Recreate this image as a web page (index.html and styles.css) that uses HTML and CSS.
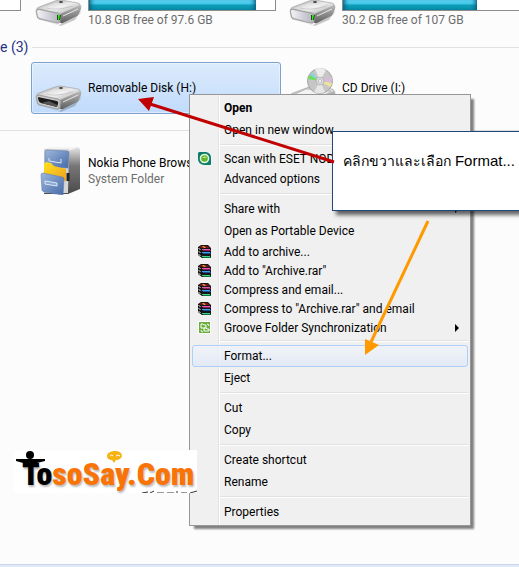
FILE: index.html
```html
<!DOCTYPE html>
<html lang="th">
<head>
  <meta charset="UTF-8">
  <meta name="viewport" content="width=device-width, initial-scale=1.0">
  <title>Computer</title>
  <link rel="stylesheet" href="styles.css">
</head>
<body>
  <!-- shared icons -->
  <svg class="defs" width="0" height="0" aria-hidden="true">
    <defs>
      <linearGradient id="metalTop" x1="0" y1="0" x2="1" y2="1">
        <stop offset="0" stop-color="#a4a4a4"/>
        <stop offset="0.5" stop-color="#ececec"/>
        <stop offset="1" stop-color="#a8a8a8"/>
      </linearGradient>
      <linearGradient id="metalSide" x1="0" y1="0" x2="0" y2="1">
        <stop offset="0" stop-color="#bcbcbc"/>
        <stop offset="1" stop-color="#5c5c5c"/>
      </linearGradient>
      <linearGradient id="metalFront" x1="0" y1="0" x2="1" y2="0">
        <stop offset="0" stop-color="#f2f2f7"/>
        <stop offset="1" stop-color="#b4b4c0"/>
      </linearGradient>
      <linearGradient id="cabinet" x1="0" y1="0" x2="0" y2="1">
        <stop offset="0" stop-color="#e8e8e8"/>
        <stop offset="0.4" stop-color="#777"/>
        <stop offset="1" stop-color="#4a4a4a"/>
      </linearGradient>
      <linearGradient id="drawer" x1="0" y1="0" x2="1" y2="1">
        <stop offset="0" stop-color="#9db8dc"/>
        <stop offset="1" stop-color="#4669a8"/>
      </linearGradient>
      <linearGradient id="folder" x1="0" y1="0" x2="1" y2="1">
        <stop offset="0" stop-color="#ffe21c"/>
        <stop offset="1" stop-color="#f0a020"/>
      </linearGradient>
      <symbol id="drive-body" viewBox="0 0 48 48">
        <path d="M4 41 L24 47 L45 36 L47 32 L40 42 L26 48 Z" fill="#000" opacity="0.2"/>
        <path d="M2 32 Q1 30 4 29 L20 23 Q23 22 26 22 L43 25 Q46 26 45 28 L26 37 Z" fill="url(#metalTop)" stroke="#9a9a9a" stroke-width="0.6"/>
        <path d="M7 30 L20 25 L33 28 L22 33 Z" fill="#fff" opacity="0.3"/>
        <path d="M11 30 Q21 33 38 28" fill="none" stroke="#aaa" stroke-width="0.5"/>
        <path d="M25 36 L45 27 Q47 27 46 31 L44 36 Q43 38 40 39 L28 45 Q25 46 25 44 Z" fill="url(#metalSide)"/>
        <path d="M28 38 L43 31" stroke="#e5e5e5" stroke-width="1"/>
        <path d="M1 33 Q1 31 4 31 L23 35 Q27 36 26 39 L25 44 Q24 46 21 45 L4 41 Q2 40 2 38 Z" fill="#b4b4b4" stroke="#8a8a8a" stroke-width="0.6"/>
        <ellipse cx="26" cy="24" rx="2" ry="1" fill="#444"/>
      </symbol>
      <symbol id="hard-drive" viewBox="0 0 48 48">
        <use href="#drive-body"/>
        <path d="M2 33 Q2 32 4 32 L22 36 Q24 36 24 38 L23 43 Q23 44 21 44 L5 40 Q3 39 3 38 Z" fill="url(#metalFront)"/>
        <path d="M22 37 L26 37 L25 42 L22 42 Z" fill="#14500f"/>
        <path d="M23 37 L25 37 L24 42 L23 42 Z" fill="#3ddb23"/>
      </symbol>
      <symbol id="removable-drive" viewBox="0 0 48 48">
        <use href="#drive-body"/>
        <path d="M2 33 Q2 32 4 32 L22 36 Q24 36 24 38 L23 43 Q23 44 21 44 L5 40 Q3 39 3 38 Z" fill="#d0d0d0"/>
        <path d="M3 33 L22 37 Q24 38 23 40 L22 43 L6 39 Q3 38 3 33 Z" fill="#1c1c1c"/>
        <path d="M6 39 L14 37 L22 41 L22 43 Z" fill="#555"/>
      </symbol>
      <symbol id="rar" viewBox="0 0 14 14">
        <path d="M0 2 L3 0 H10 L13 3 V13 H4 L0 10 Z" fill="#161616"/>
        <path d="M1 2 L3 1 H9 L12 3 H4 Z" fill="#7d1023"/>
        <path d="M4 1 H6 L8 3 H6 Z" fill="#d9a520"/>
        <path d="M4 4 H12 V5 H4 Z" fill="#e356b5"/>
        <path d="M5 5 H13 V6 H5 Z" fill="#8e1c5f"/>
        <path d="M4 7 H12 V8 H4 Z" fill="#3d9df0"/>
        <path d="M5 8 H13 V9 H5 Z" fill="#1a4f9c"/>
        <path d="M4 11 H12 V12 H4 Z" fill="#37d67e"/>
        <path d="M5 12 H13 V13 H5 Z" fill="#0d7040"/>
        <path d="M0 3 H1 L3 5 H2 Z M0 6 H1 L3 8 H2 Z M0 9 H1 L3 11 H2 Z" fill="#ddd"/>
      </symbol>
    </defs>
  </svg>

  <main class="explorer">
    <section class="tiles drives">
      <div class="tile">
        <div class="bar"></div>
        <p class="muted">&nbsp;</p>
      </div>
      <div class="tile">
        <svg class="icon"><use href="#hard-drive"/></svg>
        <div class="info">
          <div class="bar"><span class="fill" style="width: 90%"></span></div>
          <p class="muted">10.8 GB free of 97.6 GB</p>
        </div>
      </div>
      <div class="tile">
        <svg class="icon"><use href="#hard-drive"/></svg>
        <div class="info">
          <div class="bar"><span class="fill" style="width: 72%"></span></div>
          <p class="muted">30.2 GB free of 107 GB</p>
        </div>
      </div>
    </section>

    <h2 class="group-title"><span>e (3)</span></h2>

    <section class="tiles">
      <div></div>
      <div class="tile selected">
        <svg class="icon"><use href="#removable-drive"/></svg>
        <p class="name">Removable Disk (H:)</p>
      </div>
      <div class="tile">
        <svg class="icon" viewBox="0 0 48 48">
          <use href="#drive-body"/>
          <path d="M4 31 L17 25 L42 27 L28 36 Z" fill="#f3f3f3" stroke="#aaa" stroke-width="0.7"/>
          <circle cx="31" cy="17" r="12.5" fill="#c6c6c6" stroke="#a5a5a5"/>
          <path d="M31 17 L26 5 A12 12 0 0 1 37 6 Z" fill="#ececec"/>
          <path d="M31 17 L36 28 A12 12 0 0 1 25 28 Z" fill="#e6e6e6"/>
          <path d="M31 17 L19 15 A12 12 0 0 1 21 11 Z" fill="#69e05a"/>
          <path d="M31 17 L21 11 A12 12 0 0 1 23 8 Z" fill="#8fcfd6"/>
          <path d="M31 17 L43 19 A12 12 0 0 1 41 23 Z" fill="#eee59a"/>
          <path d="M31 17 L43 13 A12 12 0 0 1 43 18 Z" fill="#d9b9dc"/>
          <circle cx="31" cy="17" r="4" fill="#d9d9d9" stroke="#aaa" stroke-width="0.7"/>
          <circle cx="31" cy="17" r="1.5" fill="#fff" stroke="#999" stroke-width="0.5"/>
        </svg>
        <p class="name">CD Drive (I:)</p>
      </div>
    </section>

    <hr class="group-line">

    <section class="tiles">
      <div></div>
      <div class="tile">
        <svg class="icon" viewBox="0 0 48 48">
          <path d="M9 2 L16 0 H43 L45 2 V42 L33 47 H9 Z" fill="url(#cabinet)"/>
          <path d="M9 2 L16 0 H43 L36 3 Z" fill="#f4f4f4"/>
          <path d="M9 2 H34 L33 46 H9 Z" fill="#d5d5d5"/>
          <path d="M10 5 Q10 3 12 3 L32 4 Q34 4 34 6 L33 21 L10 20 Z" fill="url(#drawer)" stroke="#5f7fae" stroke-width="0.6"/>
          <path d="M14 11 V14 L26 16 V12" fill="none" stroke="#dce8f7" stroke-width="1"/>
          <path d="M33 26 V34" stroke="#222" stroke-width="3"/>
          <path d="M9 17 L11 15 L16 16 L19 19 L31 22 V34 L9 31 Z" fill="url(#folder)"/>
          <path d="M6 28 Q6 26 8 26 L27 30 Q29 30 29 32 L28 48 L9 45 Q7 44 7 43 Z" fill="url(#drawer)" stroke="#5f7fae" stroke-width="0.6"/>
          <path d="M10 34 V37 L22 39 V36 Z" fill="#8aa8d2" stroke="#dce8f7" stroke-width="1"/>
        </svg>
        <div class="info">
          <p class="name">Nokia Phone Browser</p>
          <p class="muted">System Folder</p>
        </div>
      </div>
    </section>
  </main>

  <div class="details-pane"></div>

  <div class="menu" role="menu">
    <button class="default">Open</button>
    <button>Open in new window</button>
    <hr>
    <button class="with-icon">
      <svg class="menu-icon" viewBox="0 0 14 14">
        <path d="M1 0 H8 Q13 1 13 6 V12 Q13 13 12 13 H6 Q0 12 0 7 V1 Z" fill="#0a7d6c"/>
        <circle cx="6.5" cy="6.5" r="4.8" fill="#e9f7df"/>
        <circle cx="6.5" cy="6.5" r="3.3" fill="#62b32e"/>
        <path d="M4 6 Q6.5 3 9 6 Z" fill="#b9e58c"/>
      </svg>
      Scan with ESET NOD
    </button>
    <button>Advanced options</button>
    <hr>
    <button class="submenu">Share with</button>
    <button>Open as Portable Device</button>
    <button class="with-icon"><svg class="menu-icon"><use href="#rar"/></svg>Add to archive...</button>
    <button class="with-icon"><svg class="menu-icon"><use href="#rar"/></svg>Add to "Archive.rar"</button>
    <button class="with-icon"><svg class="menu-icon"><use href="#rar"/></svg>Compress and email...</button>
    <button class="with-icon"><svg class="menu-icon"><use href="#rar"/></svg>Compress to "Archive.rar" and email</button>
    <button class="with-icon submenu">
      <svg class="menu-icon" viewBox="0 0 14 14">
        <rect width="13" height="13" fill="#fff"/>
        <rect x="1" y="1" width="11" height="11" fill="#6aae3c"/>
        <path d="M3 7 V3 H5 L6 4 H8 V7 Z" fill="none" stroke="#fff"/>
        <path d="M6 10 V7 H8 L9 8 H11 V10 Z" fill="#6aae3c" stroke="#fff"/>
        <path d="M9 3 Q11 3 11 5 M3 9 Q3 11 5 11" fill="none" stroke="#fff"/>
      </svg>
      Groove Folder Synchronization
    </button>
    <hr>
    <button class="active">Format...</button>
    <button>Eject</button>
    <hr>
    <button>Cut</button>
    <button>Copy</button>
    <hr>
    <button>Create shortcut</button>
    <button>Rename</button>
    <hr>
    <button>Properties</button>
  </div>

  <div class="callout">คลิกขวาและเลือก <span class="latin">Format...</span></div>

  <svg class="arrows" aria-hidden="true">
    <path d="M334 162 L150 104" stroke="#c00000" stroke-width="3"/>
    <path d="M138 99 L154 97 L149 111 Z" fill="#c00000"/>
    <path d="M428 221 L371 342" stroke="#ff9900" stroke-width="3"/>
    <path d="M365 355 L365 339 L379 345 Z" fill="#ff9900"/>
  </svg>

  <div class="logo">
    <svg class="logo-art" viewBox="0 0 183 43" aria-hidden="true">
      <circle cx="16" cy="5" r="4" fill="#000"/>
      <path d="M2 9 H31 V11 L23 13 H9 L2 11 Z" fill="#000"/>
      <path d="M101 1 C110 1 110 10 102 10 L100 13 L98 10 C91 10 91 1 101 1 Z" fill="#f5b314"/>
      <path d="M96 6 Q98 4 99 6 M102 6 Q104 4 106 6" fill="none" stroke="#fff"/>
      <path d="M128 43 L134 42 M136 43 L140 41 M143 43 H150 M153 43 H160 M163 41 V43 M167 43 H173 M176 43 L183 41" stroke="#333" stroke-width="1"/>
    </svg>
    <span class="dark">To</span><span>soSay.Com</span>
  </div>
</body>
</html>
```
FILE: styles.css
```css
body {
  margin: 0;
  min-height: 100vh;
  display: flex;
  flex-direction: column;
  position: relative;
  overflow: hidden;
  background-color: #fcfcfc;
  color: #000;
  font-family: Roboto, "Open Sans", sans-serif;
  font-size: 12px;
  line-height: 16px;
}

p {
  margin: 0;
}

.defs {
  position: absolute;
}

.explorer {
  flex: 1;
}

/* Tiles */
.tiles {
  display: grid;
  grid-template-columns: 27px 250px minmax(250px, 1fr);
  gap: 4px;
}

.tile {
  display: flex;
  align-items: center;
  gap: 5px;
  box-sizing: border-box;
  height: 52px;
  padding: 0 3px;
  border: 1px solid transparent;
  border-radius: 3px;
  white-space: nowrap;
}

.tile.selected {
  border-color: #7da2ce;
  background: linear-gradient(#dcebfc, #c1dbfc);
  box-shadow: inset 0 0 0 1px rgba(255, 255, 255, 0.4);
}

.icon {
  flex: none;
  width: 48px;
  height: 48px;
}

.muted {
  color: #6d6d6d;
}

/* only the lower part of the drives row is scrolled into view */
.drives {
  height: 29px;
}

.drives .tile {
  height: 29px;
  align-items: flex-end;
  overflow: hidden;
  padding-bottom: 1px;
  border-width: 0 1px;
}

.drives .tile:first-child {
  flex-direction: column;
  align-items: stretch;
  justify-content: flex-end;
  gap: 0;
  padding-left: 0;
  padding-right: 5px;
  border-left: 0;
}

.drives .tile:first-child .bar {
  border-left: 0;
}

.drives .icon {
  margin-bottom: 2px;
}

.drives .info {
  width: 188px;
}

.bar {
  height: 11px;
  margin-bottom: 1px;
  border: 1px solid #8c8c8c;
  border-top: 0;
  box-sizing: border-box;
  background-color: #fff;
}

.fill {
  display: block;
  height: 10px;
  background: linear-gradient(#5fd6f5 0, #3fc4e6 4px, #0b9fb8 5px, #0a8ca8 10px);
  box-shadow: inset 5px 0 4px -3px #0a5f80, inset -5px 0 4px -3px #0a5f80;
}

/* Groups */
.group-title {
  display: flex;
  align-items: center;
  gap: 4px;
  margin: 8px 0 5px;
  color: #1e3287;
  font-size: 14px;
  font-weight: normal;
  line-height: 20px;
}

.group-title::after {
  content: "";
  flex: 1;
  border-top: 1px solid #e0e0e0;
}

.group-line {
  margin: 16px 0 14px;
  border: 0;
  border-top: 1px solid #e0e0e0;
}

.details-pane {
  height: 2px;
  border-top: 1px solid #c9d6ec;
  background-color: #e0e9f6;
}

/* Context menu */
.menu {
  position: absolute;
  top: 94px;
  left: 189px;
  box-sizing: border-box;
  width: 282px;
  padding: 2px;
  border: 1px solid #979797;
  background: linear-gradient(to right, transparent 28px, #e2e3e3 28px, #e2e3e3 29px, #fff 29px, #fff 30px, transparent 30px) #f0f0f0;
  box-shadow: 4px 4px 2px -1px #808080;
}

.menu button {
  display: flex;
  align-items: center;
  box-sizing: border-box;
  width: 100%;
  height: 22px;
  padding: 0 8px 0 31px;
  border: 1px solid transparent;
  border-radius: 3px;
  background: none;
  color: #000;
  font: inherit;
  text-align: left;
  white-space: nowrap;
}

.menu button.default {
  font-weight: bold;
}

.menu button.with-icon {
  height: 19px;
  padding-left: 5px;
}

.menu button.active {
  border-color: #aecff7;
  background: linear-gradient(rgba(240, 244, 250, 0.8), rgba(224, 232, 246, 0.8));
}

.menu button.submenu::after {
  content: "";
  margin-left: auto;
  border: 4px solid transparent;
  border-left-color: #000;
  border-right: 0;
}

.menu-icon {
  flex: none;
  width: 14px;
  height: 14px;
  margin-right: 12px;
}

.menu hr {
  margin: 3px 0 3px 28px;
  border: 0;
  border-top: 1px solid #e0e0e0;
  border-bottom: 1px solid #fff;
}

/* Notes drawn over the window */
.callout {
  position: absolute;
  top: 131px;
  left: 332px;
  right: -4px;
  box-sizing: border-box;
  height: 80px;
  padding: 18px 10px;
  border: 1px solid #1f497d;
  background-color: #fff;
  box-shadow: 4px 4px 4px rgba(0, 0, 0, 0.6);
  font-family: "Liberation Sans", sans-serif;
  font-size: 14px;
  line-height: 22px;
  white-space: nowrap;
}

.callout .latin {
  font-size: 15px;
}

.arrows {
  position: absolute;
  top: 0;
  left: 0;
  width: 100%;
  height: 100%;
  pointer-events: none;
}

.logo {
  position: absolute;
  top: 450px;
  left: 14px;
  display: flex;
  align-items: flex-end;
  box-sizing: border-box;
  width: 183px;
  height: 43px;
  padding: 0 2px 1px 8px;
  background-color: #fff;
  color: #f97306;
  font-family: "Roboto Condensed", Roboto, sans-serif;
  font-size: 32px;
  font-weight: 900;
  line-height: 36px;
  text-shadow: 1px 2px 2px #bbb;
}

.logo .dark {
  color: #000;
}

.logo-art {
  position: absolute;
  top: 0;
  left: 0;
  width: 183px;
  height: 43px;
}
```
